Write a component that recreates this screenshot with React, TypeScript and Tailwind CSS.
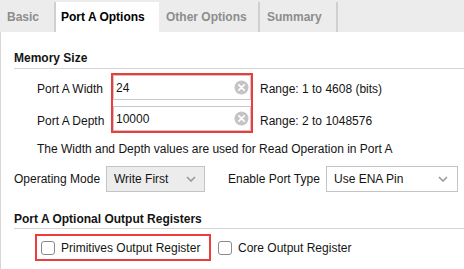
import React from 'react';

function ClearIcon() {
  return (
    <svg width="15" height="15" viewBox="0 0 16 16" aria-hidden="true">
      <circle cx="8" cy="8" r="7.5" fill="#c4c4c4" />
      <path d="M5.2 5.2 L10.8 10.8 M10.8 5.2 L5.2 10.8" stroke="#fff" strokeWidth="1.8" strokeLinecap="round" />
    </svg>
  );
}

function Chevron() {
  return (
    <svg width="10" height="6" viewBox="0 0 10 6" aria-hidden="true">
      <path d="M1 1 L5 5 L9 1" fill="none" stroke="#9a9a9a" strokeWidth="1.6" />
    </svg>
  );
}

function Checkbox() {
  return <span className="w-[14px] h-[14px] rounded-[3px] border border-[#8c8c8c] bg-white shrink-0" />;
}

function NumberField({ value }: { value: string }) {
  return (
    <div className="h-[25px] flex items-center justify-between border border-[#c8c8c8] bg-white pl-[2px] pr-[1px]">
      <span>{value}</span>
      <ClearIcon />
    </div>
  );
}

const tabs = [
  { label: 'Basic', width: 'w-[56px]' },
  { label: 'Port A Options', width: 'w-[103px]' },
  { label: 'Other Options', width: 'w-[101px]' },
  { label: 'Summary', width: 'w-[78px]' },
];

export default function App(): JSX.Element {
  const active = 'Port A Options';

  return (
    <div className="w-[464px] h-[269px] bg-white text-[12px] text-[#141414] overflow-hidden whitespace-nowrap" style={{ fontFamily: '"Liberation Sans", Arial, sans-serif' }}>
      <div className="h-8 bg-[#ececec] flex items-end">
        {tabs.map((t) => (
          <div
            key={t.label}
            className={
              t.label === active
                ? `${t.width} h-[30px] flex items-center pl-[5px] bg-white font-bold text-black`
                : `${t.width} h-[30px] flex items-center pl-[7px] font-bold text-[#8d8d8d] border-r-2 border-[#d0d0d0]`
            }
          >
            {t.label}
          </div>
        ))}
      </div>

      <div className="border-l border-[#d6d6d6] h-[237px] pl-[13px] pt-[18px]">
        <div className="font-bold leading-[16px]">Memory Size</div>
        <div className="h-px bg-[#d4d4d4] mt-[2px]" />

        <div className="flex mt-[4px] pl-[23px]">
          <div className="w-[74px] shrink-0 flex flex-col pt-[8px] gap-[16px] leading-[16px]">
            <span>Port A Width</span>
            <span>Port A Depth</span>
          </div>
          <div className="w-[142px] shrink-0 border-2 border-[#ee3b3b] flex flex-col gap-[6px]">
            <NumberField value="24" />
            <NumberField value="10000" />
          </div>
          <div className="flex flex-col pl-[7px] pt-[8px] gap-[16px] leading-[16px]">
            <span>Range: 1 to 4608 (bits)</span>
            <span>Range: 2 to 1048576</span>
          </div>
        </div>

        <div className="pl-[23px] mt-[8px] leading-[16px]">
          The Width and Depth values are used for Read Operation in Port A
        </div>

        <div className="flex items-center mt-[9px] h-[26px]">
          <span className="w-[92px] shrink-0">Operating Mode</span>
          <div className="w-[99px] shrink-0 h-[26px] bg-[#ececec] border border-[#c4c4c4] flex items-center justify-between pl-[7px] pr-[8px]">
            <span>Write First</span>
            <Chevron />
          </div>
          <span className="ml-[23px] w-[98px] shrink-0">Enable Port Type</span>
          <div className="w-[132px] shrink-0 h-[26px] bg-white border border-[#c4c4c4] flex items-center justify-between pl-[7px] pr-[9px]">
            <span>Use ENA Pin</span>
            <Chevron />
          </div>
        </div>

        <div className="font-bold leading-[16px] mt-[19px]">Port A Optional Output Registers</div>
        <div className="h-px bg-[#d4d4d4] mt-[1px]" />

        <div className="flex items-center mt-[5px]">
          <div className="ml-[21px] w-[176px] shrink-0 h-[27px] border-2 border-[#ee3b3b] flex items-center gap-[6px] pl-[4px]">
            <Checkbox />
            <span>Primitives Output Register</span>
          </div>
          <div className="flex items-center gap-[6px] ml-[7px]">
            <Checkbox />
            <span>Core Output Register</span>
          </div>
        </div>
      </div>
    </div>
  );
}
